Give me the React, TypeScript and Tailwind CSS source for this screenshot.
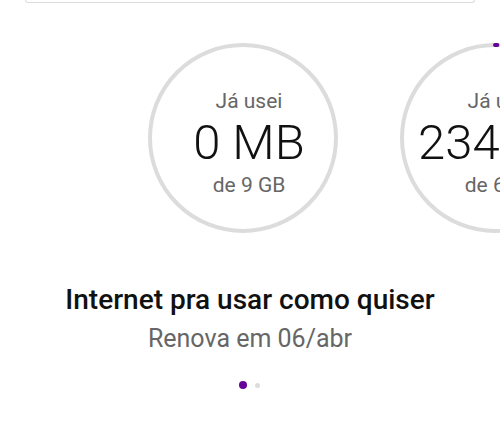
import React from "react";

function Ring({ progress, used, total }: { progress: number; used: string; total: string }) {
  const size = 190;
  const sw = 4;
  const r = (size - sw) / 2;
  const c = 2 * Math.PI * r;
  return (
    <div className="relative w-[190px] h-[190px] shrink-0">
      <svg width={size} height={size} className="absolute inset-0 -rotate-90">
        <circle cx={size / 2} cy={size / 2} r={r} fill="none" stroke="#dcdcdc" strokeWidth={sw} />
        {progress > 0 && (
          <circle
            cx={size / 2}
            cy={size / 2}
            r={r}
            fill="none"
            stroke="#660099"
            strokeWidth={sw}
            strokeLinecap="round"
            strokeDasharray={`${c * progress} ${c}`}
          />
        )}
      </svg>
      <div className="relative flex flex-col items-center h-full pt-[45px] pl-[12px]">
        <span className="text-[21px] leading-[26px] text-[#666666] whitespace-nowrap">Já usei</span>
        <span className="text-[49px] leading-[58px] font-light text-[#111111] whitespace-nowrap">{used}</span>
        <span className="text-[21px] leading-[26px] text-[#666666] whitespace-nowrap">{total}</span>
      </div>
    </div>
  );
}

export default function App() {
  return (
    <div className="w-[500px] h-[437px] bg-white overflow-hidden" style={{ fontFamily: "Roboto, 'Noto Sans', sans-serif" }}>
      <div className="mx-[25px] h-[3px] border-x border-b border-[#dddddd] rounded-b-[4px]" />
      <div className="flex gap-[62px] pl-[148px] mt-[40px] overflow-hidden">
        <Ring progress={0} used="0 MB" total="de 9 GB" />
        <Ring progress={0.004} used="234 MB" total="de 6 GB" />
      </div>
      <div className="flex flex-col items-center mt-[51px]">
        <h2 className="text-[28px] leading-[32px] font-medium text-[#111111] whitespace-nowrap">Internet pra usar como quiser</h2>
        <p className="text-[25px] leading-[30px] text-[#666666] mt-[8px] whitespace-nowrap">Renova em 06/abr</p>
        <div className="flex items-center gap-[8px] mt-[27px] ml-[-1px]">
          <span className="w-[8px] h-[8px] rounded-full bg-[#660099]" />
          <span className="w-[5px] h-[5px] rounded-full bg-[#dddddd]" />
        </div>
      </div>
    </div>
  );
}
